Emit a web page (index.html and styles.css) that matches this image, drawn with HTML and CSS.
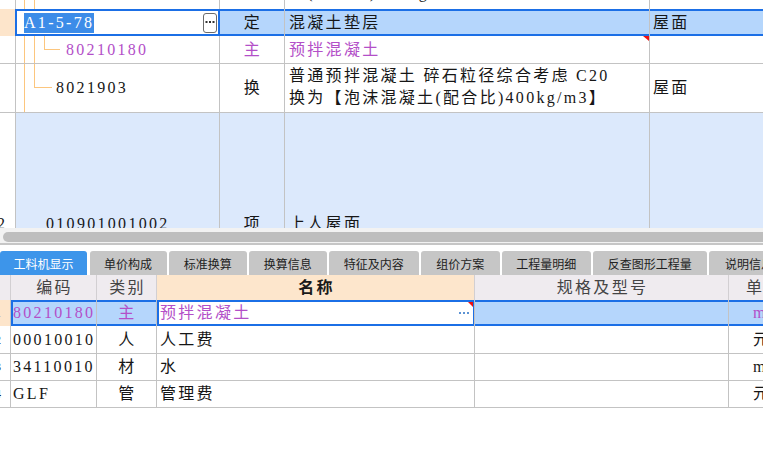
FILE: index.html
```html
<!DOCTYPE html>
<html>
<head>
<meta charset="utf-8">
<link rel="stylesheet" href="styles.css">
</head>
<body>
<div class="top">
  <div class="row r0">
    <div class="c g"></div>
    <div class="c code tree-r0">801001001 0020</div>
    <div class="c type"></div>
    <div class="c name">土(配合比)400kg/m3】</div>
    <div class="c last"></div>
  </div>
  <div class="row r1 sel">
    <div class="c g"></div>
    <div class="c code active"><span class="hl">A1-5-78</span><span class="btn"><svg width="14" height="20" viewBox="0 0 14 20"><rect x="0.5" y="0.5" width="13" height="19" rx="2.5" fill="#fff" stroke="#6b6b6b"/><rect x="2.5" y="8" width="2" height="2" fill="#333"/><rect x="6" y="8" width="2" height="2" fill="#333"/><rect x="9.5" y="8" width="2" height="2" fill="#333"/></svg></span></div>
    <div class="c type">定</div>
    <div class="c name">混凝土垫层</div>
    <div class="c last">屋面</div>
  </div>
  <div class="row r2">
    <div class="c g"></div>
    <div class="c code tree-r2 purple">80210180</div>
    <div class="c type purple">主</div>
    <div class="c name purple flag">预拌混凝土</div>
    <div class="c last"></div>
  </div>
  <div class="row r3">
    <div class="c g"></div>
    <div class="c code tree-r3">8021903</div>
    <div class="c type">换</div>
    <div class="c name"><div class="ml">普通预拌混凝土 碎石粒径综合考虑 C20<br>换为【泡沫混凝土(配合比)400kg/m3】</div></div>
    <div class="c last">屋面</div>
  </div>
  <div class="row r4">
    <div class="c g"><span class="num">2</span></div>
    <div class="c code tree-r4">010901001002</div>
    <div class="c type">项</div>
    <div class="c name">上人屋面</div>
    <div class="c last"></div>
  </div>
</div>
<div class="hscroll"><div class="thumb"></div></div>
<div class="divider"></div>
<div class="tabs">
  <div class="tab on w1">工料机显示</div>
  <div class="tab w2">单价构成</div>
  <div class="tab w3">标准换算</div>
  <div class="tab w3">换算信息</div>
  <div class="tab w5">特征及内容</div>
  <div class="tab w6">组价方案</div>
  <div class="tab w7">工程量明细</div>
  <div class="tab w8">反查图形工程量</div>
  <div class="tab w9">说明信息</div>
</div>
<div class="bgrid">
  <div class="row bh">
    <div class="c bg"></div>
    <div class="c bcode hc">编码</div>
    <div class="c btype hc">类别</div>
    <div class="c bname hc strong">名称</div>
    <div class="c bspec hc">规格及型号</div>
    <div class="c bunit hu">单位</div>
  </div>
  <div class="row b1 sel">
    <div class="c bg"><span class="bnum">1</span></div>
    <div class="c bcode first purple">80210180</div>
    <div class="c btype purple">主</div>
    <div class="c bname active purple flag2">预拌混凝土<span class="dots"><svg width="12" height="2" viewBox="0 0 12 2"><rect x="0" y="0" width="2" height="2" fill="#5c93d4"/><rect x="4" y="0" width="2" height="2" fill="#5c93d4"/><rect x="8" y="0" width="2" height="2" fill="#5c93d4"/></svg></span></div>
    <div class="c bspec"></div>
    <div class="c bunit purple">m3</div>
  </div>
  <div class="row b2">
    <div class="c bg"><span class="bnum">2</span></div>
    <div class="c bcode">00010010</div>
    <div class="c btype">人</div>
    <div class="c bname">人工费</div>
    <div class="c bspec"></div>
    <div class="c bunit">元</div>
  </div>
  <div class="row b3">
    <div class="c bg"><span class="bnum">3</span></div>
    <div class="c bcode">34110010</div>
    <div class="c btype">材</div>
    <div class="c bname">水</div>
    <div class="c bspec"></div>
    <div class="c bunit">m3</div>
  </div>
  <div class="row b3">
    <div class="c bg"><span class="bnum">4</span></div>
    <div class="c bcode">GLF</div>
    <div class="c btype">管</div>
    <div class="c bname">管理费</div>
    <div class="c bspec"></div>
    <div class="c bunit">元</div>
  </div>
</div>
</body>
</html>
```
FILE: styles.css
```css
html, body {
  margin: 0;
  padding: 0;
  background: #fff;
}
body {
  width: 763px;
  height: 464px;
  overflow: hidden;
  font-family: "Liberation Serif", "Noto Sans CJK SC", serif;
  font-size: 16px;
  letter-spacing: 2.3px;
  color: #161616;
}
.top {
  height: 228px;
  overflow: hidden;
}
.row {
  display: flex;
  box-sizing: border-box;
}
.c {
  box-sizing: border-box;
  border-right: 1px solid #c3c3c3;
  display: flex;
  align-items: center;
  white-space: nowrap;
  overflow: hidden;
  position: relative;
  line-height: 18px;
}
.g { width: 16px; }
.code { width: 204px; padding-left: 8px; }
.type { width: 65px; justify-content: center; padding-left: 2px; }
.name { width: 365px; padding-left: 4px; }
.last { flex: 1; padding-left: 3px; border-right: none; }

.purple { color: #b34fc8; }

.r0 { height: 30px; margin-top: -21px; }
.r0 .c { align-items: flex-end; padding-bottom: 7px; }
.r0 .code { padding-left: 39px; }
.r1 { height: 27px; }
.r2 { height: 28px; border-bottom: 1px solid #c3c3c3; }
.r3 { height: 49px; border-bottom: 1px solid #c3c3c3; }
.r4 { height: 222px; }
.r4 .c:not(.g) { background: #dce9fc; }
.r4 .code { padding-left: 30px; }
.num { margin-left: -3px; }

.sel .c { background: #b5d6fc; box-shadow: inset 0 2px 0 #1b6fe6, inset 0 -2px 0 #1b6fe6; }
.sel .g, .sel .bg { background: #fde5cb; box-shadow: none; border-right-color: #1b6fe6; }
.sel .active {
  background: #fff;
  border-right-color: #1b6fe6;
  box-shadow: inset 1px 0 0 #1b6fe6, inset -1px 0 0 #1b6fe6, inset 0 2px 0 #1b6fe6, inset 0 -2px 0 #1b6fe6;
}
.r1 .code { justify-content: space-between; padding-right: 2px; }
.hl {
  background: #3c8ce8;
  color: #fff;
  line-height: 20px;
  letter-spacing: 2.3px;
}
.btn { display: flex; }

.tree-r0 {
  background:
    linear-gradient(#fcc67e, #fcc67e) 8px 0 / 1px 100% no-repeat,
    linear-gradient(#fcc67e, #fcc67e) 18px 0 / 1px 100% no-repeat;
}
.tree-r2 {
  padding-left: 50px;
  background:
    linear-gradient(#fcc67e, #fcc67e) 8px 0 / 1px 100% no-repeat,
    linear-gradient(#fcc67e, #fcc67e) 18px 0 / 1px 100% no-repeat,
    linear-gradient(#fcc67e, #fcc67e) 28px 0 / 1px 13px no-repeat,
    linear-gradient(#fcc67e, #fcc67e) 28px 13px / 16px 1px no-repeat;
}
.tree-r3 {
  padding-left: 40px;
  background:
    linear-gradient(#fcc67e, #fcc67e) 8px 0 / 1px 100% no-repeat,
    linear-gradient(#fcc67e, #fcc67e) 18px 0 / 1px 23px no-repeat,
    linear-gradient(#fcc67e, #fcc67e) 18px 23px / 18px 1px no-repeat;
}
.r4 .tree-r4 {
  background:
    linear-gradient(#fcc67e, #fcc67e) 8px 0 / 1px 111px no-repeat,
    linear-gradient(#fcc67e, #fcc67e) 8px 111px / 16px 1px no-repeat,
    #dce9fc;
}
.ml { line-height: 22px; padding-bottom: 2px; }
.flag::after {
  content: "";
  position: absolute;
  top: 0;
  right: 0;
  border-top: 5px solid #f01010;
  border-left: 6px solid transparent;
}

.hscroll {
  height: 15px;
  background: #f2f2f2;
  padding: 4px 0 1px 3px;
  box-sizing: border-box;
  overflow: hidden;
}
.thumb {
  height: 10px;
  width: 800px;
  background: #bebebe;
  border-radius: 5px;
}
.divider {
  height: 2px;
  background: #c6c6c6;
  margin-bottom: 6px;
}

.tabs {
  display: flex;
  gap: 2.5px;
  height: 24px;
  overflow: hidden;
  font-family: "Noto Sans CJK SC", sans-serif;
  font-size: 12px;
  letter-spacing: 0;
}
.tab {
  flex: none;
  background: #c6c6c6;
  color: #222;
  border-radius: 3px 3px 0 0;
  display: flex;
  align-items: center;
  justify-content: center;
  white-space: nowrap;
}
.tab.on { background: #3d95ea; color: #fff; }
.w1 { width: 87px; }
.w2 { width: 77px; }
.w3 { width: 77.5px; }
.w5 { width: 89.5px; }
.w6 { width: 78.5px; }
.w7 { width: 88.5px; }
.w8 { width: 113.5px; }
.w9 { width: 80px; }

.bgrid .c { border-right-color: #c3c3c3; }
.bg { width: 11px; }
.bcode { width: 86px; padding-left: 2px; }
.btype { width: 60px; justify-content: center; padding-left: 2px; }
.bname { width: 318px; padding-left: 3px; }
.bspec { width: 254px; }
.bunit { flex: 1; padding-left: 24px; border-right: none; }
.bh { height: 25px; background: #efebef; }
.bh .c { border-right-color: #d2cfd2; }
.hc { justify-content: center; color: #444; padding-left: 2px; }
.hu { padding-left: 17px; color: #444; }
.bh .bname { background: #fde6cc; }
.strong { font-weight: bold; color: #1a1a1a; }
.b1 { height: 26px; }
.b2 { height: 28px; border-bottom: 1px solid #c3c3c3; }
.b3 { height: 27px; border-bottom: 1px solid #c3c3c3; }
.bnum { font-size: 12px; margin-left: -5px; letter-spacing: 0; }
.b1 .first { box-shadow: inset 2px 0 0 #1b6fe6, inset 0 2px 0 #1b6fe6, inset 0 -2px 0 #1b6fe6; }
.b1 .bg { border-right-color: #c3c3c3; }
.b1 .bname { box-shadow: inset 2px 0 0 #1b6fe6, inset -1px 0 0 #1b6fe6, inset 0 2px 0 #1b6fe6, inset 0 -2px 0 #1b6fe6; }
.dots { display: flex; margin-left: auto; margin-right: 3px; }
.flag2::after {
  content: "";
  position: absolute;
  top: 2px;
  right: 1px;
  border-top: 5px solid #f01010;
  border-left: 5px solid transparent;
}
```
